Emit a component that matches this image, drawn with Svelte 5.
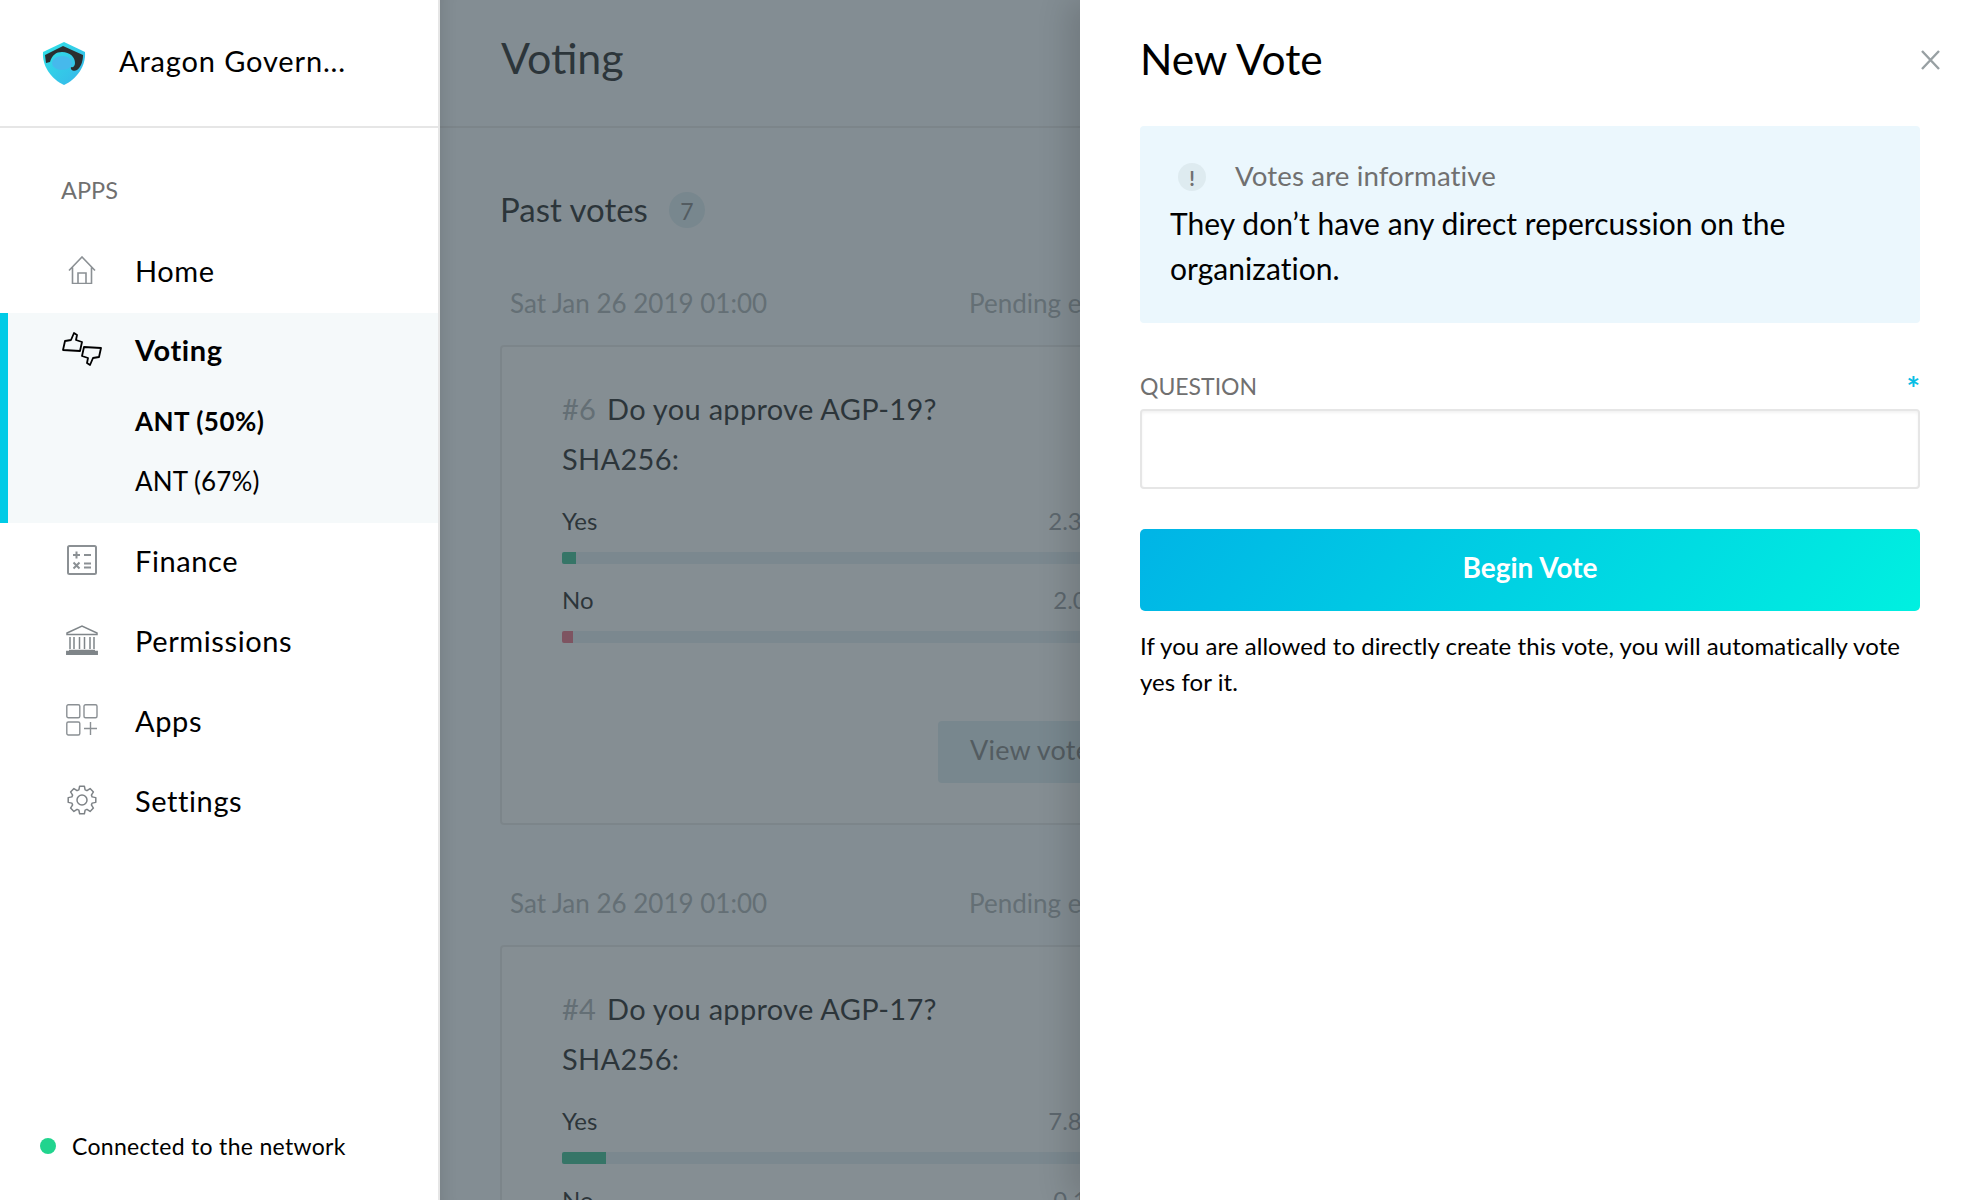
<script>
  const votes = [
    { id: 6, date: 'Sat Jan 26 2019 01:00', title: 'Do you approve AGP-19?', yes: '2.3k ANT', no: '2.0k ANT', yesWidth: 14, noWidth: 11 },
    { id: 4, date: 'Sat Jan 26 2019 01:00', title: 'Do you approve AGP-17?', yes: '7.8k ANT', no: '0.1k ANT', yesWidth: 44, noWidth: 4 }
  ]

  // cog outline: 8 teeth round the centre of a 30x30 box
  function cogPath() {
    const points = []
    for (let i = 0; i < 8; i++) {
      const a = (i * Math.PI) / 4
      for (const [r, da] of [[10.6, -0.3], [14, -0.17], [14, 0.17], [10.6, 0.3]]) {
        points.push(`${(15 + r * Math.sin(a + da)).toFixed(2)} ${(15 - r * Math.cos(a + da)).toFixed(2)}`)
      }
    }
    return 'M' + points.join(' L') + ' Z'
  }
</script>

<div class="page">
  <aside class="sidebar">
    <header class="org">
      <svg class="logo" viewBox="0 0 44 43" width="44" height="43">
        <defs>
          <linearGradient id="shield" x1="0" y1="0" x2="1" y2="1">
            <stop offset="0" stop-color="#2fe3e6" />
            <stop offset="1" stop-color="#38b4ea" />
          </linearGradient>
        </defs>
        <path d="M22 0 L43 10 C44 24 35 37 22 43 C9 37 0 24 1 10 Z" fill="url(#shield)" />
        <ellipse cx="20" cy="21" rx="10" ry="7" fill="#46b9ec" />
        <path d="M3 13 L21 4 L41 13 C41 19 39 25 35 28 C32 30 28 28 29 25 C31 26 33 24 33 21 C33 15 28 10 20 10 C14 10 10 13 8 20 L4 21 Z" fill="#2a2e30" />
      </svg>
      <span class="org-name">Aragon Govern...</span>
    </header>

    <div class="apps-label">APPS</div>

    <nav>
      <a class="item">
        <span class="icon">
          <svg viewBox="0 0 28 28" width="28" height="28" fill="none" stroke="#8b9094" stroke-width="1.6">
            <path d="M1 14.5 L14 1 L27 14.5 M4.5 11.5 V27.5 H23.5 V11.5 M10 27.5 V17 H18 V27.5" />
          </svg>
        </span>
        Home
      </a>

      <div class="active">
        <a class="item selected">
          <span class="icon">
            <svg viewBox="0 0 40 34" width="40" height="34" fill="none" stroke="#000" stroke-width="1.8" stroke-linejoin="round">
              <path d="M1 18 L3 9 L9 8 L12 1 L15 3 L14 8 L20 10 L18 19 Z" />
              <path d="M39 17 L37 26 L31 27 L28 34 L25 32 L26 27 L20 25 L22 16 Z" transform="translate(0 -1)" />
            </svg>
          </span>
          Voting
        </a>
        <a class="sub bold">ANT (50%)</a>
        <a class="sub">ANT (67%)</a>
      </div>

      <a class="item">
        <span class="icon">
          <svg viewBox="0 0 30 30" width="30" height="30" fill="none" stroke="#8b9094" stroke-width="2">
            <rect x="1" y="1" width="28" height="28" rx="1.5" />
            <path d="M6 10 H13 M9.5 6.5 V13.5 M17 10 H24 M6.5 17.5 L12.5 23.5 M12.5 17.5 L6.5 23.5 M17 18.5 H24 M17 22.5 H24" />
          </svg>
        </span>
        Finance
      </a>
      <a class="item">
        <span class="icon">
          <svg viewBox="0 0 32 30" width="32" height="30" fill="none" stroke="#7f8589" stroke-width="1.5">
            <path d="M1 8 L16 1 L31 8 V9.5 H1 Z" />
            <path d="M4 12 V24 M8 12 V24 M13.5 12 V24 M18.5 12 V24 M24 12 V24 M28 12 V24 M3 25.5 H29" />
            <rect x="0.8" y="26.5" width="30.4" height="2.8" fill="#7f8589" />
          </svg>
        </span>
        Permissions
      </a>
      <a class="item">
        <span class="icon">
          <svg viewBox="0 0 32 32" width="32" height="32" fill="none" stroke="#8b9094" stroke-width="1.4">
            <rect x="0.8" y="0.8" width="13" height="13" rx="1.5" />
            <rect x="18" y="0.8" width="13" height="13" rx="1.5" />
            <rect x="0.8" y="18" width="13" height="13" rx="1.5" />
            <path d="M24.5 18 V31 M18 24.5 H31" />
          </svg>
        </span>
        Apps
      </a>
      <a class="item">
        <span class="icon">
          <svg viewBox="0 0 30 30" width="30" height="30" fill="none" stroke="#7d8286" stroke-width="1.5" stroke-linejoin="round">
            <circle cx="15" cy="15" r="5" />
            <path d={cogPath()} />
          </svg>
        </span>
        Settings
      </a>
    </nav>

    <footer class="status">
      <span class="dot"></span>
      Connected to the network
    </footer>
  </aside>

  <main class="main">
    <header class="main-header">
      <h1>Voting</h1>
    </header>
    <div class="content">
      <div class="section-title">
        <h2>Past votes</h2>
        <span class="badge">7</span>
      </div>

      {#each votes as vote}
        <div class="meta">
          <span>{vote.date}</span>
          <span class="pending">Pending execution</span>
        </div>
        <div class="card">
          <div class="question"><span class="num">#{vote.id}</span> {vote.title}</div>
          <div class="question">SHA256:</div>
          <div class="option">
            <span>Yes</span>
            <span class="amount">{vote.yes}</span>
          </div>
          <div class="track">
            <div class="fill yes" style="width: {vote.yesWidth}px"></div>
          </div>
          <div class="option second">
            <span>No</span>
            <span class="amount lower">{vote.no}</span>
          </div>
          <div class="track">
            <div class="fill no" style="width: {vote.noWidth}px"></div>
          </div>
          <div class="actions">
            <button class="view">View vote</button>
          </div>
        </div>
      {/each}
    </div>
    <div class="overlay"></div>
  </main>

  <section class="panel">
    <div class="panel-head">
      <h1>New Vote</h1>
      <button class="close" aria-label="Close">
        <svg viewBox="0 0 21 20" width="21" height="20" fill="none" stroke="#98a0a3" stroke-width="2.4">
          <path d="M2 1 L19 19 M19 1 L2 19" />
        </svg>
      </button>
    </div>

    <div class="info">
      <div class="info-title">
        <span class="info-icon">!</span>
        Votes are informative
      </div>
      <p>They don’t have any direct repercussion on the organization.</p>
    </div>

    <div class="field-label">
      <span>QUESTION</span>
      <span class="required">*</span>
    </div>
    <input class="input" type="text" />

    <button class="begin">Begin Vote</button>

    <p class="hint">If you are allowed to directly create this vote, you will automatically vote yes for it.</p>
  </section>
</div>

<style>
  :global(body) {
    margin: 0;
  }

  .page {
    position: relative;
    display: flex;
    width: 1980px;
    height: 1200px;
    overflow: hidden;
    background: #fff;
    color: #000;
    font-family: Lato, "Liberation Sans", sans-serif;
  }

  .sidebar {
    flex: 0 0 440px;
    box-sizing: border-box;
    display: flex;
    flex-direction: column;
    border-right: 2px solid #e6e6e6;
    background: #fff;
  }

  .org {
    box-sizing: border-box;
    height: 128px;
    display: flex;
    align-items: center;
    padding-left: 42px;
    border-bottom: 2px solid #e6e6e6;
  }

  .org-name {
    margin: 0 0 5px 33px;
    font-size: 29px;
    letter-spacing: 0.85px;
  }

  .apps-label {
    margin: 47px 0 0 61px;
    line-height: 30px;
    font-size: 23.5px;
    color: #707070;
  }

  nav {
    margin-top: 28px;
  }

  .item {
    box-sizing: border-box;
    display: flex;
    align-items: center;
    height: 80px;
    padding: 0 0 6px 62px;
    font-size: 29px;
    letter-spacing: 0.6px;
  }

  .icon {
    flex: 0 0 40px;
    margin-right: 33px;
    display: flex;
    justify-content: center;
  }

  .active {
    box-sizing: border-box;
    height: 210px;
    border-left: 8px solid #00cbe6;
    background: #f5f9fa;
  }

  .selected {
    height: 78px;
    padding-left: 54px;
    font-weight: 700;
  }

  .sub {
    display: block;
    padding-left: 127px;
    line-height: 60px;
    font-size: 26px;
    letter-spacing: 0.1px;
  }

  .bold {
    font-weight: 700;
    letter-spacing: 0.5px;
  }

  .status {
    margin-top: auto;
    height: 69px;
    display: flex;
    align-items: flex-start;
    padding-left: 40px;
    font-size: 23px;
    line-height: 30px;
    letter-spacing: 0.3px;
  }

  .dot {
    width: 16px;
    height: 16px;
    margin: 7px 16px 0 0;
    border-radius: 50%;
    background: #21d48e;
  }

  .main {
    position: relative;
    flex: 1;
    min-width: 0;
    background: #fafdfe;
  }

  .main-header {
    box-sizing: border-box;
    height: 128px;
    display: flex;
    align-items: center;
    padding-left: 61px;
    border-bottom: 2px solid #e6e6e6;
  }

  .main-header h1 {
    margin: 0 0 12px;
    font-size: 43px;
    font-weight: 400;
  }

  .content {
    padding: 61px 0 0 60px;
  }

  .section-title {
    display: flex;
    align-items: center;
    height: 40px;
  }

  .section-title h2 {
    margin: 0;
    font-size: 33px;
    font-weight: 400;
  }

  .badge {
    width: 36px;
    height: 36px;
    margin: 2px 0 0 21px;
    border-radius: 50%;
    background: #d9eaf0;
    color: #707070;
    font-size: 23px;
    line-height: 38px;
    text-align: center;
  }

  .meta {
    display: flex;
    width: 680px;
    margin: 59px 0 27px;
    padding-left: 10px;
    color: #a0a5a8;
    font-size: 26px;
    line-height: 30px;
    white-space: nowrap;
  }

  .card + .meta {
    margin-top: 63px;
  }

  .pending {
    margin-left: 202px;
  }

  .card {
    box-sizing: border-box;
    width: 1000px;
    height: 480px;
    padding: 37px 60px 0;
    border: 2px solid #e6e6e6;
    border-radius: 4px;
    background: #fff;
  }

  .card .question {
    font-size: 29px;
    line-height: 50px;
    letter-spacing: 0.3px;
  }

  .num {
    margin-right: 3px;
    color: #a0a5a8;
  }

  .option {
    display: flex;
    margin-top: 22px;
    font-size: 24px;
    line-height: 30px;
  }

  .option.second {
    margin-top: 21px;
  }

  .amount {
    margin-left: auto;
    margin-right: 290px;
    color: #8c9194;
  }

  .amount.lower {
    margin-right: 285px;
  }

  .track {
    height: 12px;
    margin-top: 16px;
    border-radius: 2px;
    background: #e3eef2;
  }

  .fill {
    height: 100%;
    border-radius: 2px 0 0 2px;
  }

  .fill.yes {
    background: #1fb782;
  }

  .fill.no {
    background: #ea5b6f;
  }

  .actions {
    display: flex;
    margin-top: 78px;
  }

  .view {
    width: 240px;
    height: 62px;
    margin-left: 376px;
    padding: 0 0 6px 32px;
    border: 0;
    border-radius: 4px;
    background: #daeaef;
    color: #707070;
    font: inherit;
    font-size: 27px;
    letter-spacing: 0.2px;
    text-align: left;
  }

  .overlay {
    position: absolute;
    inset: 0;
    background: rgba(68, 81, 89, 0.65);
    box-shadow: inset 18px 0 18px -18px rgba(0, 0, 0, 0.12);
  }

  .panel {
    position: absolute;
    top: 0;
    right: 0;
    bottom: 0;
    box-sizing: border-box;
    width: 900px;
    padding: 0 60px;
    background: #fff;
    box-shadow: -12px 0 30px rgba(0, 0, 0, 0.14);
  }

  .panel-head {
    position: relative;
    height: 126px;
    display: flex;
    align-items: center;
  }

  .panel-head h1 {
    margin: 0 0 9px;
    font-size: 42.5px;
    font-weight: 400;
  }

  .close {
    position: absolute;
    top: 50px;
    right: -21px;
    padding: 0;
    border: 0;
    background: none;
    line-height: 0;
  }

  .info {
    box-sizing: border-box;
    height: 197px;
    padding: 34px 30px 0;
    border-radius: 4px;
    background: #ebf7fd;
  }

  .info-title {
    display: flex;
    align-items: center;
    height: 30px;
    padding-left: 8px;
    color: #707070;
    font-size: 27.7px;
    letter-spacing: 0.1px;
    white-space: nowrap;
  }

  .info-icon {
    width: 28px;
    height: 28px;
    margin: 4px 29px 0 0;
    border-radius: 50%;
    background: #deebf0;
    color: #707070;
    font-size: 20px;
    font-weight: 700;
    line-height: 30px;
    text-align: center;
  }

  .info p {
    margin: 11px 0 0;
    font-size: 30px;
    line-height: 45px;
    letter-spacing: 0.05px;
  }

  .field-label {
    display: flex;
    justify-content: space-between;
    height: 30px;
    margin-top: 48px;
    color: #707070;
    font-size: 23px;
    line-height: 30px;
  }

  .required {
    margin-top: 3px;
    color: #08bee5;
    font-size: 32px;
    font-weight: 700;
    line-height: 30px;
  }

  .input {
    display: block;
    box-sizing: border-box;
    width: 100%;
    height: 80px;
    margin: 8px 0 0;
    border: 2px solid #e6e6e6;
    border-radius: 4px;
    background: #fff;
    box-shadow: inset 0 2px 3px rgba(0, 0, 0, 0.05);
  }

  .begin {
    display: block;
    width: 100%;
    height: 82px;
    margin-top: 40px;
    padding: 0 0 7px;
    border: 0;
    border-radius: 5px;
    background: linear-gradient(130deg, #00b4e6, #00f0e0);
    color: #fff;
    font: inherit;
    font-size: 28px;
    font-weight: 700;
  }

  .hint {
    margin: 17px 0 0;
    font-size: 24px;
    line-height: 36px;
    letter-spacing: 0.06px;
  }
</style>
